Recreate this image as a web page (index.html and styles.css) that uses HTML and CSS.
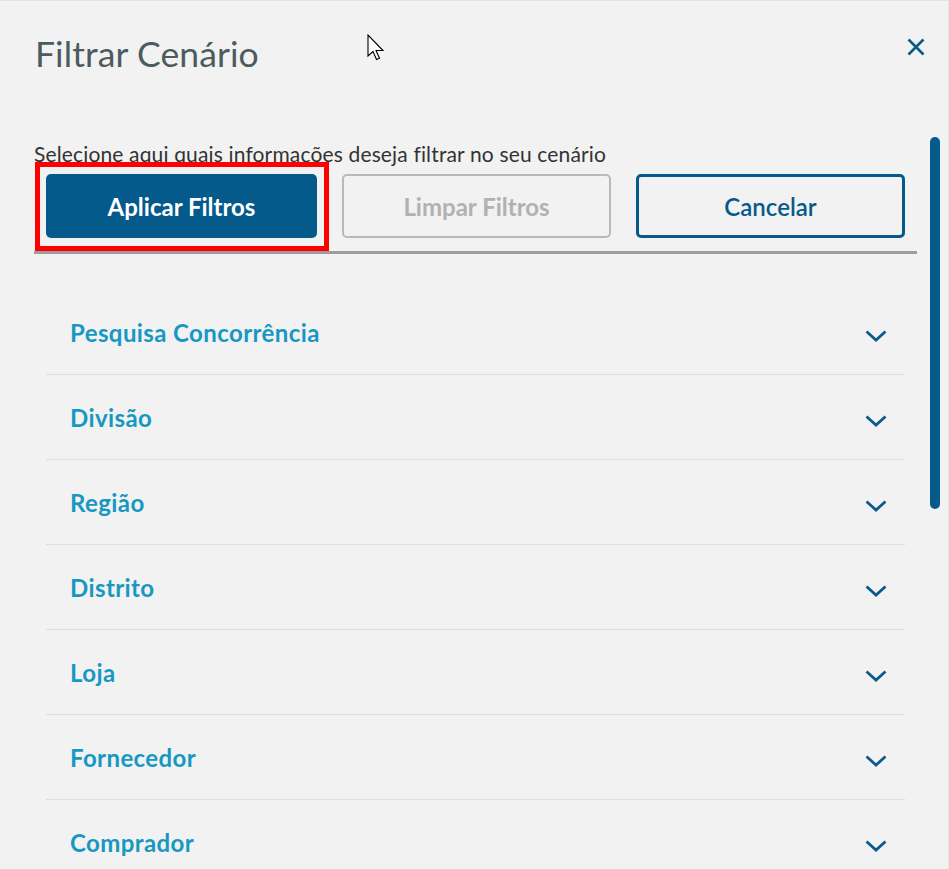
FILE: index.html
```html
<!DOCTYPE html>
<html lang="pt-BR">
<head>
<meta charset="utf-8">
<title>Filtrar Cenário</title>
<link rel="stylesheet" href="styles.css">
</head>
<body>
<div class="panel">
  <header class="header">
    <h1 class="title">Filtrar Cenário</h1>
    <button class="close" aria-label="Fechar">
      <svg width="18" height="18" viewBox="0 0 18 18"><path d="M1.5 1.5 L16.5 16.5 M16.5 1.5 L1.5 16.5" stroke="#0b5a8c" stroke-width="2.6" fill="none" stroke-linecap="butt"/></svg>
    </button>
  </header>
  <svg class="cursor" width="19" height="28" viewBox="0 0 19 28"><path d="M1 1 L1 22 L6 17.5 L9.5 25.5 L12.5 24.2 L9 16.5 L16 16.5 Z" fill="#fff" stroke="#000" stroke-width="1.1" stroke-linejoin="miter"/></svg>
  <div class="body">
    <div class="main">
      <p class="subtitle">Selecione aqui quais informações deseja filtrar no seu cenário</p>
      <div class="actions">
        <button class="btn btn-primary">Aplicar Filtros</button>
        <button class="btn btn-disabled">Limpar Filtros</button>
        <button class="btn btn-outline">Cancelar</button>
        <div class="highlight"></div>
      </div>
      <div class="divider"></div>
      <ul class="list">
        <li class="item"><span>Pesquisa Concorrência</span><svg class="chev" width="22" height="12" viewBox="0 0 22 12"><path d="M1.5 1.5 L11 10 L20.5 1.5" stroke="#0b5a8c" stroke-width="2.8" fill="none"/></svg></li>
        <li class="item"><span>Divisão</span><svg class="chev" width="22" height="12" viewBox="0 0 22 12"><path d="M1.5 1.5 L11 10 L20.5 1.5" stroke="#0b5a8c" stroke-width="2.8" fill="none"/></svg></li>
        <li class="item"><span>Região</span><svg class="chev" width="22" height="12" viewBox="0 0 22 12"><path d="M1.5 1.5 L11 10 L20.5 1.5" stroke="#0b5a8c" stroke-width="2.8" fill="none"/></svg></li>
        <li class="item"><span>Distrito</span><svg class="chev" width="22" height="12" viewBox="0 0 22 12"><path d="M1.5 1.5 L11 10 L20.5 1.5" stroke="#0b5a8c" stroke-width="2.8" fill="none"/></svg></li>
        <li class="item"><span>Loja</span><svg class="chev" width="22" height="12" viewBox="0 0 22 12"><path d="M1.5 1.5 L11 10 L20.5 1.5" stroke="#0b5a8c" stroke-width="2.8" fill="none"/></svg></li>
        <li class="item"><span>Fornecedor</span><svg class="chev" width="22" height="12" viewBox="0 0 22 12"><path d="M1.5 1.5 L11 10 L20.5 1.5" stroke="#0b5a8c" stroke-width="2.8" fill="none"/></svg></li>
        <li class="item"><span>Comprador</span><svg class="chev" width="22" height="12" viewBox="0 0 22 12"><path d="M1.5 1.5 L11 10 L20.5 1.5" stroke="#0b5a8c" stroke-width="2.8" fill="none"/></svg></li>
      </ul>
    </div>
    <div class="track"><div class="thumb"></div></div>
  </div>
</div>
</body>
</html>
```
FILE: styles.css
```css
* { box-sizing: border-box; }
html, body { margin: 0; padding: 0; }
body {
  background: #f2f2f2;
  font-family: Lato, "Open Sans", sans-serif;
  width: 949px;
  height: 869px;
  overflow: hidden;
}
.panel {
  position: relative;
  height: 869px;
  border-top: 1px solid #dfe3e8;
  border-right: 1px solid #e2e4e8;
  background: #f2f2f2;
}
.header {
  display: flex;
  justify-content: space-between;
  align-items: flex-start;
  padding: 0 23px 0 35px;
  height: 136px;
}
.title {
  margin: 29px 0 0;
  font-size: 35.5px;
  font-weight: 400;
  line-height: 48px;
  color: #4b5b60;
  letter-spacing: 0.1px;
}
.close {
  margin-top: 37px;
  padding: 0;
  border: 0;
  background: none;
  width: 18px;
  height: 18px;
}
.close svg { display: block; }
.cursor {
  position: absolute;
  left: 367px;
  top: 33px;
}
.body {
  display: flex;
  gap: 13px;
  padding-left: 34px;
}
.main {
  width: 883px;
}
.subtitle {
  margin: 5px 0 0;
  font-size: 21px;
  line-height: 24px;
  letter-spacing: 0.15px;
  color: #333;
}
.actions {
  position: relative;
  display: grid;
  grid-template-columns: 271px 269px 1fr;
  gap: 25px;
  margin: 8px 12px 0;
}
.btn {
  height: 64px;
  border-radius: 5px;
  font-family: Lato, sans-serif;
  font-size: 24px;
  font-weight: 700;
  letter-spacing: 0;
  background: transparent;
}
.btn-primary {
  background: #055a8c;
  border: 0;
  color: #fff;
}
.btn-disabled {
  border: 2px solid #b9b9b9;
  color: #b1b1b1;
}
.btn-outline {
  border: 3px solid #055a8c;
  color: #055a8c;
  font-weight: 600;
}
.highlight {
  position: absolute;
  left: -11px;
  top: -12px;
  width: 294px;
  height: 89px;
  border: 5px solid #ff0000;
  pointer-events: none;
}
.divider {
  height: 3px;
  margin-top: 13px;
  background: #9d9d9d;
}
.list {
  list-style: none;
  margin: 36px 12px 0;
  padding: 0;
}
.item {
  display: flex;
  align-items: center;
  justify-content: space-between;
  height: 85px;
  padding: 0 18px 0 24px;
  border-bottom: 1px solid #dedede;
  font-size: 24px;
  font-weight: 700;
  letter-spacing: 0.4px;
  color: #1798c3;
}
.chev {
  display: block;
  margin-top: 7px;
}
.track {
  width: 10px;
}
.thumb {
  width: 10px;
  height: 372px;
  border-radius: 5px;
  background: #055a8c;
}
```
